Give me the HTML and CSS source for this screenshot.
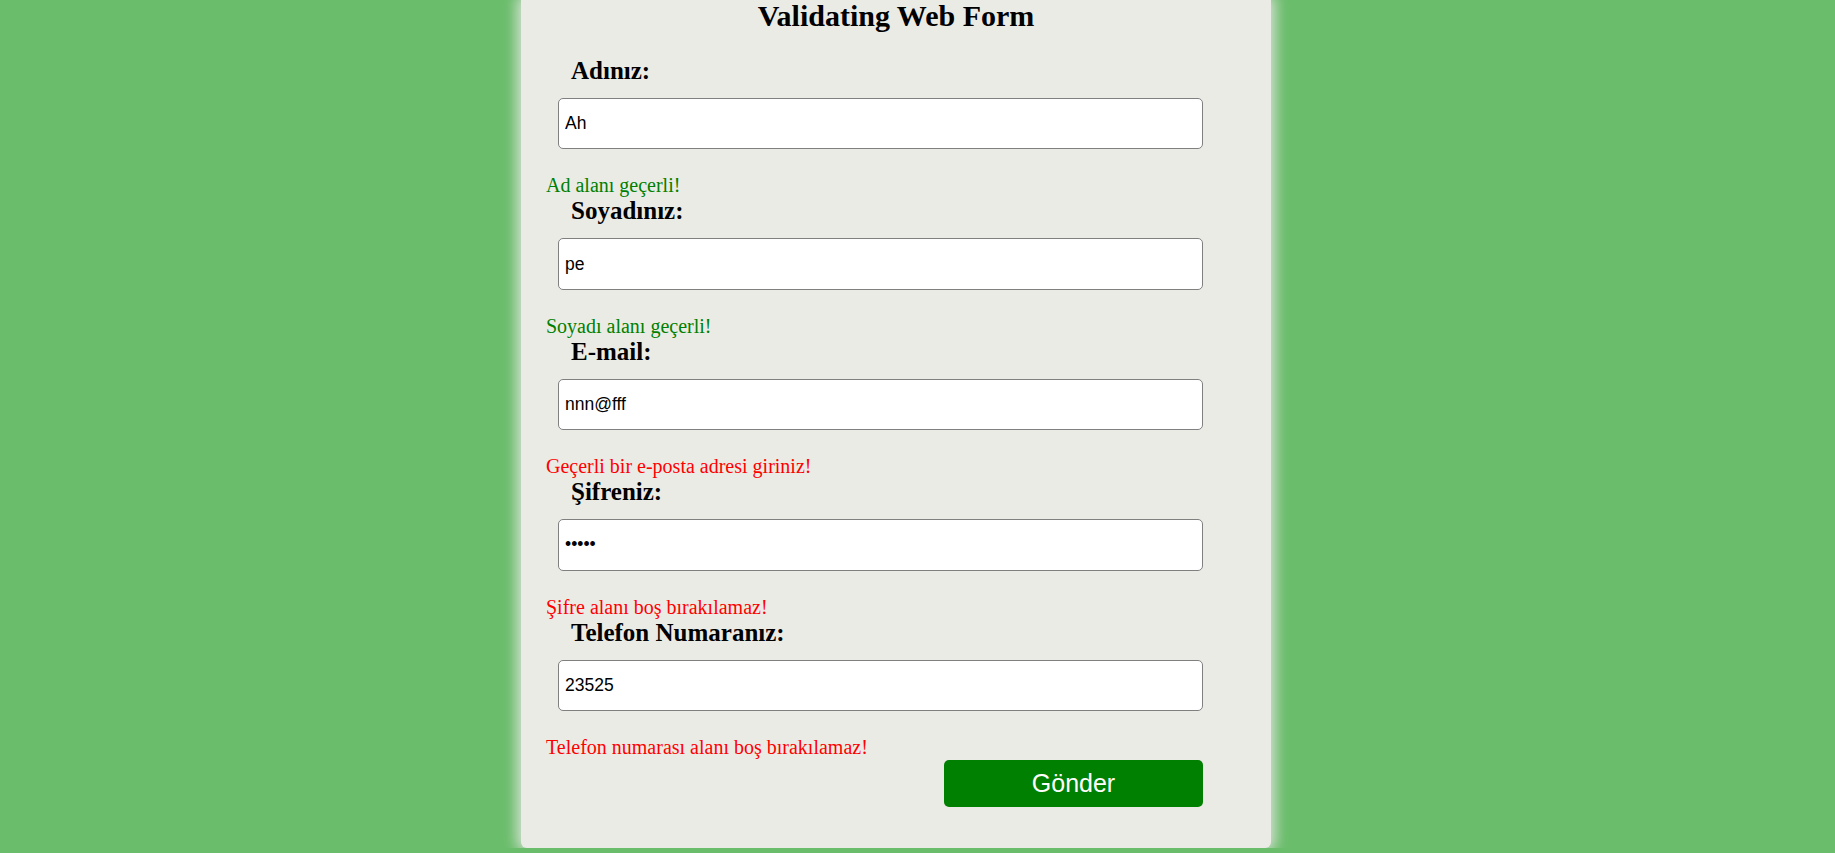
FILE: index.html
```html
<!DOCTYPE html>
<html lang="tr">
<head>
<meta charset="utf-8">
<title>Validating Web Form</title>
<link rel="stylesheet" href="styles.css">
</head>
<body>
<div class="page">
  <div class="card">
    <h2 class="title">Validating Web Form</h2>
    <form class="form" onsubmit="return false;">
      <h3 class="label">Adınız:</h3>
      <input class="field" type="text" value="Ah">
      <div class="msg ok">Ad alanı geçerli!</div>

      <h3 class="label">Soyadınız:</h3>
      <input class="field" type="text" value="pe">
      <div class="msg ok">Soyadı alanı geçerli!</div>

      <h3 class="label">E-mail:</h3>
      <input class="field" type="text" value="nnn@fff">
      <div class="msg err">Geçerli bir e-posta adresi giriniz!</div>

      <h3 class="label">Şifreniz:</h3>
      <input class="field" type="password" value="12345">
      <div class="msg err">Şifre alanı boş bırakılamaz!</div>

      <h3 class="label">Telefon Numaranız:</h3>
      <input class="field" type="text" value="23525">
      <div class="msg err">Telefon numarası alanı boş bırakılamaz!</div>

      <button class="submit" type="submit">Gönder</button>
    </form>
  </div>
</div>
</body>
</html>
```

FILE: styles.css
```css
html, body {
  margin: 0;
  padding: 0;
}

body {
  background: #6abd6b;
  font-family: "Liberation Serif", "Times New Roman", serif;
  overflow: hidden;
}

.page {
  display: flex;
  justify-content: center;
  padding-right: 43px;
}

.card {
  width: 750px;
  background: #ebebe6;
  border-radius: 0 0 6px 6px;
  box-shadow: 0 0 14px 4px rgba(225, 228, 222, 0.95);
  padding: 0 0 41px;
  box-sizing: border-box;
}

.title {
  margin: -1px 0 24px;
  font-size: 30px;
  font-weight: bold;
  text-align: center;
  color: #000;
  line-height: normal;
}

.form {
  display: flex;
  flex-direction: column;
  padding: 0 68px 0 25px;
}

.label {
  margin: 0 0 12.5px 25px;
  font-size: 25px;
  font-weight: bold;
  line-height: 28.5px;
  color: #000;
}

.field {
  box-sizing: border-box;
  margin: 0 0 25px 12px;
  height: 51.4px;
  padding: 0 6px;
  border: 1px solid #808080;
  border-radius: 5px;
  background: #fff;
  font-family: "Liberation Sans", Arial, sans-serif;
  font-size: 17.5px;
  color: #000;
  outline: none;
}

.msg {
  font-size: 20px;
  line-height: 23px;
}

.ok {
  color: #008000;
}

.err {
  color: #ff0000;
}

.submit {
  align-self: flex-end;
  margin-top: 1px;
  width: 259px;
  height: 47px;
  border: none;
  border-radius: 5px;
  background: #008000;
  color: #fff;
  font-family: "Liberation Sans", Arial, sans-serif;
  font-size: 25px;
  cursor: pointer;
}
```
